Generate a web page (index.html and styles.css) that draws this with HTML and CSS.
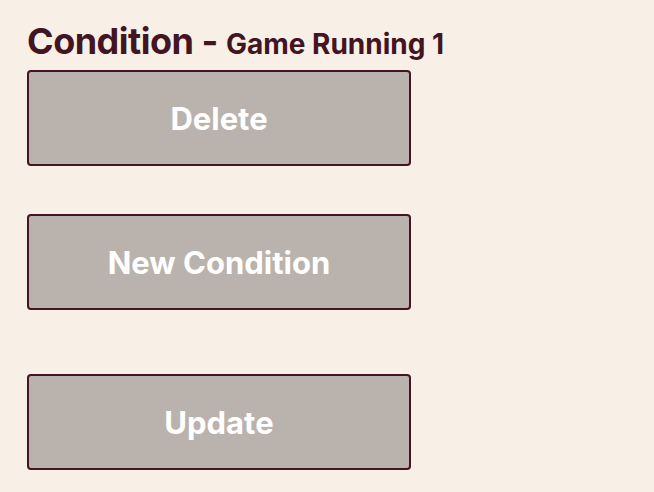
FILE: index.html
```html
<!DOCTYPE html>
<html>
<head>
<meta charset="utf-8">
<link rel="stylesheet" href="styles.css">
</head>
<body>
<main class="panel">
  <h1 class="title">Condition - <span class="subtitle">Game Running 1</span></h1>
  <button class="btn">Delete</button>
  <button class="btn btn-new">New Condition</button>
  <button class="btn btn-update">Update</button>
</main>
</body>
</html>
```
FILE: styles.css
```css
html, body {
  margin: 0;
  padding: 0;
  background: #f8f0e6;
}
.panel {
  display: flex;
  flex-direction: column;
  align-items: flex-start;
  padding: 20px 0 0 27px;
  font-family: Inter, "Liberation Sans", sans-serif;
  color: #431421;
}
.title {
  margin: 0 0 4px 0;
  font-size: 36px;
  font-weight: 700;
  line-height: 43px;
  letter-spacing: -0.5px;
}
.subtitle {
  font-size: 28px;
  letter-spacing: 0;
}
.btn {
  box-sizing: border-box;
  width: 384px;
  height: 96px;
  background: #bab3ad;
  border: 2px solid #431421;
  border-radius: 4px;
  color: #ffffff;
  font-family: Inter, "Liberation Sans", sans-serif;
  font-size: 31px;
  font-weight: 700;
  padding: 0;
  margin: 0;
}
.btn-new {
  margin-top: 48px;
}
.btn-update {
  margin-top: 64px;
}
```
